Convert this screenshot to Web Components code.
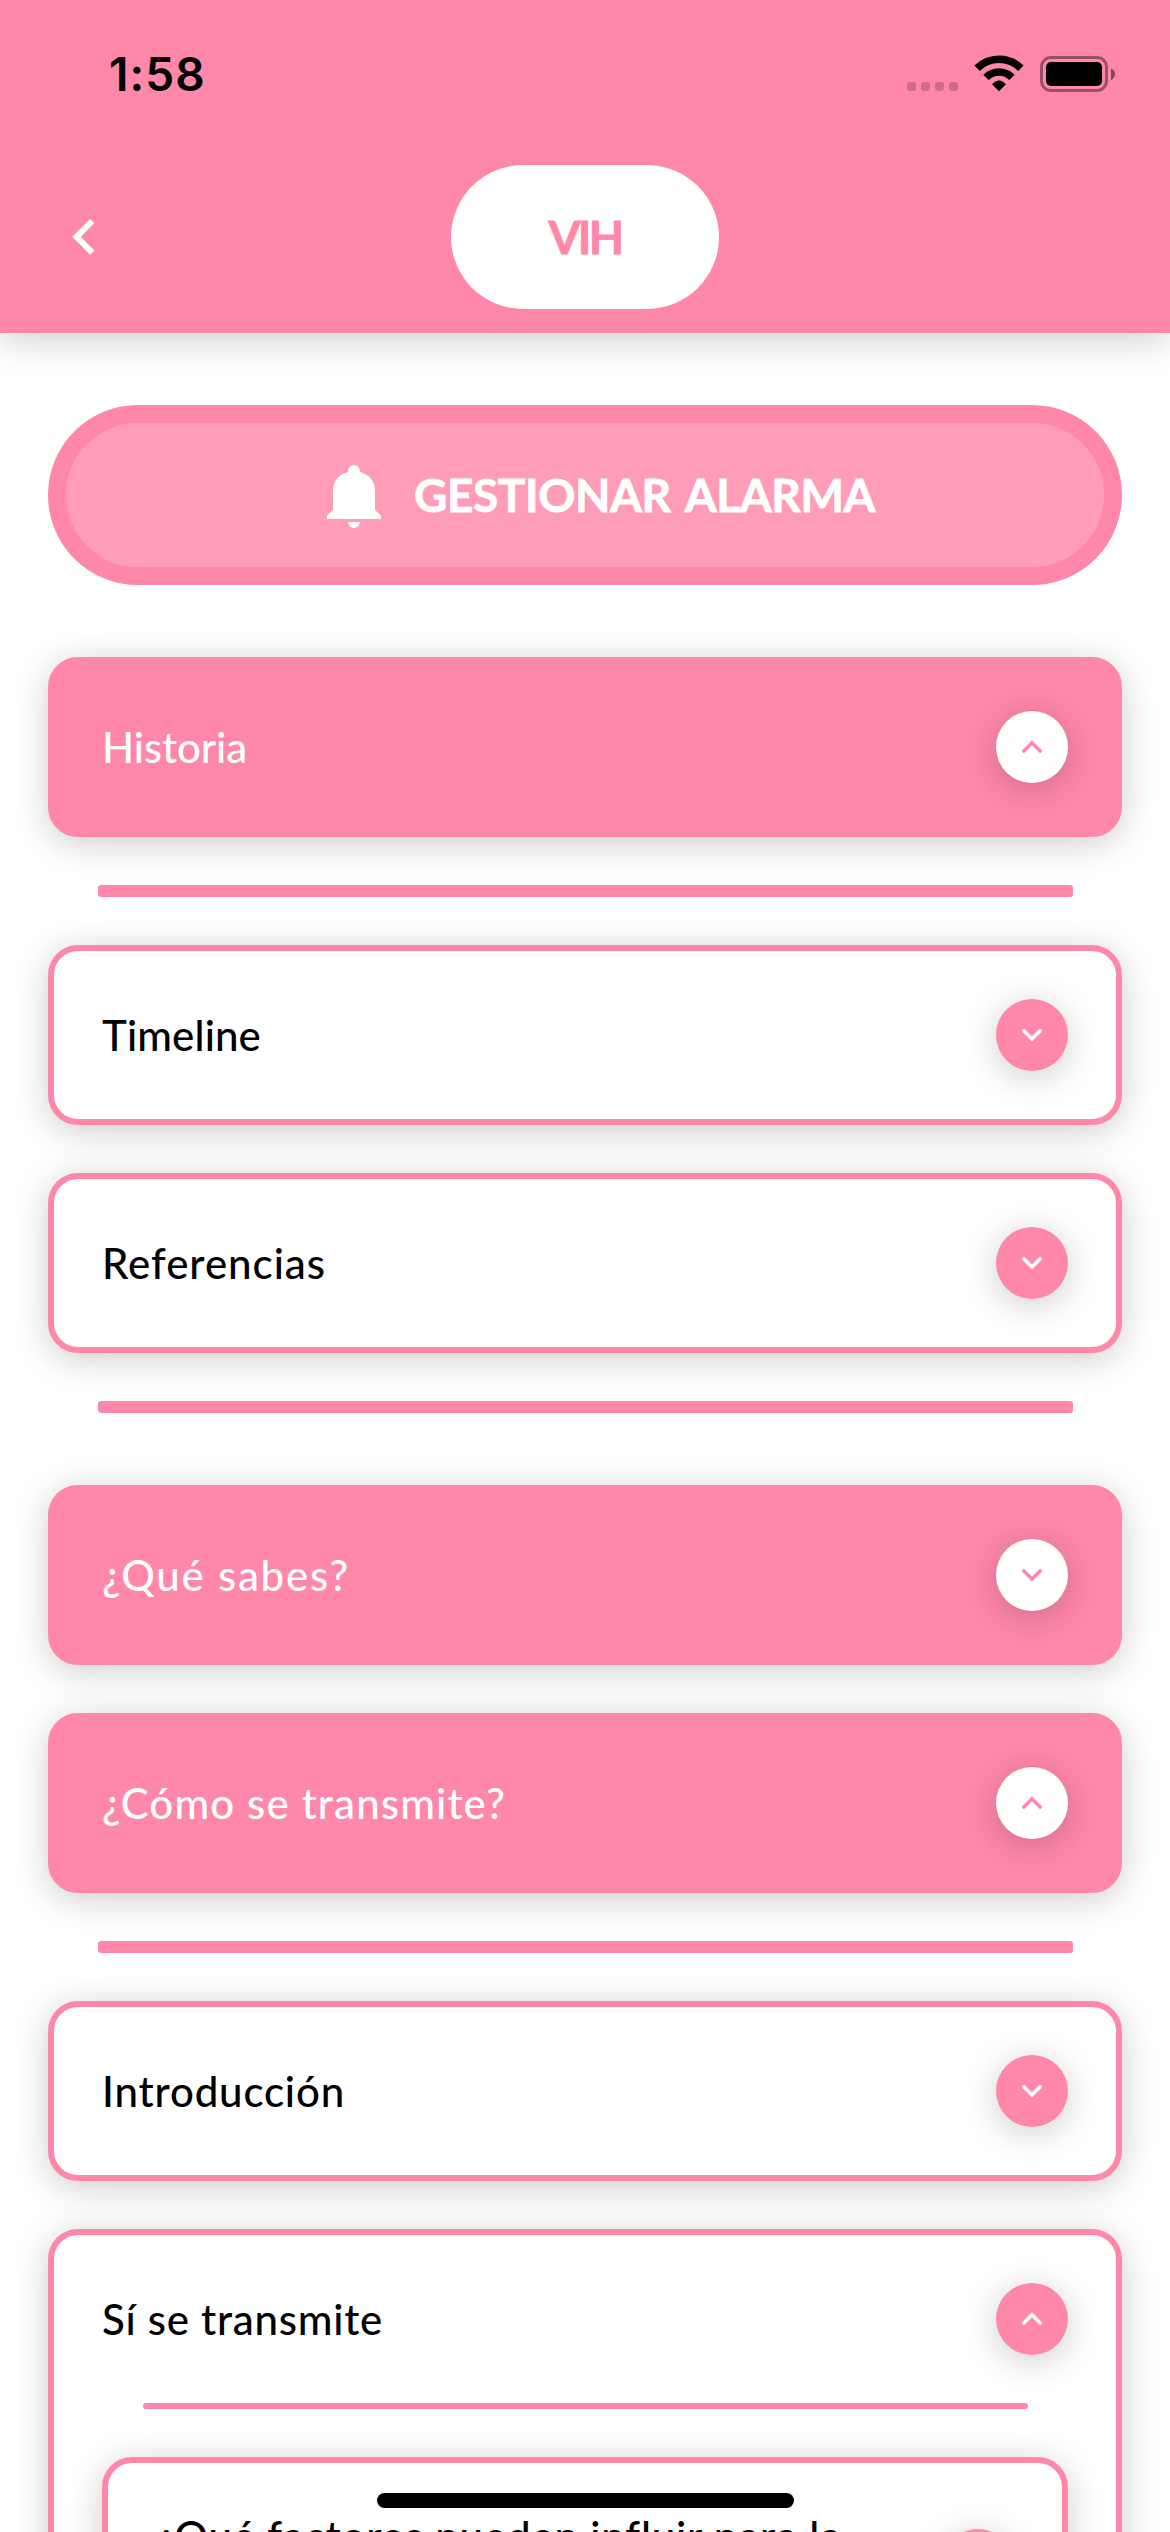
<!DOCTYPE html>
<html lang="es">
<head>
<meta charset="utf-8">
<title>VIH</title>
<style>
  :root { --pink: #ff87aa; --soft: #ff9cb8; --shadow: 0 6px 36px rgba(0,0,0,.2); }
  html, body { margin: 0; background: #fff; height: 2532px; overflow: hidden; }
  body { font-family: Lato, "Open Sans", sans-serif; font-weight: 500; color: #000; }
</style>
</head>
<body>
<app-screen>
  <app-header slot="header" time="1:58"><fit-text width="73">VIH</fit-text></app-header>
  <alarm-button><fit-text width="461">GESTIONAR ALARMA</fit-text></alarm-button>
  <accordion-card solid open style="margin-top:72px"><fit-text slot="title" width="145">Historia</fit-text></accordion-card>
  <rule-bar></rule-bar>
  <accordion-card><fit-text slot="title" width="159">Timeline</fit-text></accordion-card>
  <accordion-card style="margin-top:48px"><fit-text slot="title" width="224">Referencias</fit-text></accordion-card>
  <rule-bar></rule-bar>
  <accordion-card solid style="margin-top:24px"><fit-text slot="title" width="248">¿Qué sabes?</fit-text></accordion-card>
  <accordion-card solid open style="margin-top:48px"><fit-text slot="title" width="404">¿Cómo se transmite?</fit-text></accordion-card>
  <rule-bar></rule-bar>
  <accordion-card><fit-text slot="title" width="243">Introducción</fit-text></accordion-card>
  <accordion-card open style="margin-top:48px"><fit-text slot="title" width="281">Sí se transmite</fit-text>
    <rule-bar thin></rule-bar>
    <accordion-card tall><fit-text slot="title" width="686">¿Qué factores pueden influir para la</fit-text></accordion-card>
  </accordion-card>
</app-screen>
<home-indicator></home-indicator>

<script>
const define = (name, html, extra) => {
  const tpl = document.createElement('template');
  tpl.innerHTML = html;
  customElements.define(name, class extends HTMLElement {
    constructor() {
      super();
      this.attachShadow({ mode: 'open' }).append(tpl.content.cloneNode(true));
    }
    connectedCallback() { if (extra) extra(this, this.shadowRoot); }
  });
};

define('app-screen', `
  <style>
    :host { display: flex; flex-direction: column; height: 2532px; overflow: hidden; }
    main { display: flex; flex: none; flex-direction: column; padding: 72px 48px 0; }
  </style>
  <slot name="header"></slot><main><slot></slot></main>`);

define('status-bar', `
  <style>
    :host { display: flex; justify-content: space-between; align-items: flex-start; height: 54px; padding: 47px 54px 0 109px; color: #000; }
    span { font: 600 46px/54px Inter, sans-serif; letter-spacing: 1.1px; }
    svg { display: block; }
  </style>
  <span></span>
  <svg width="209" height="54" viewBox="907 47 209 54">
    <g fill="#000" fill-opacity=".2"><rect x="907" y="82" width="9" height="9" rx="3"/><rect x="921" y="82" width="9" height="9" rx="3"/><rect x="935" y="82" width="9" height="9" rx="3"/><rect x="949" y="82" width="9" height="9" rx="3"/></g>
    <g fill="none" stroke="#000" stroke-width="7.6"><path d="M977.1 68.3A31.2 31.2 0 0 1 1020.9 68.3"/><path d="M986 77.4A18.3 18.3 0 0 1 1012 77.4"/></g>
    <path d="M992 84.2Q999 76.600 1006 84.200L999 91.200Z"/>
    <rect x="1041.500" y="57.500" width="65" height="33" rx="9.500" fill="none" stroke="#000" stroke-opacity=".4" stroke-width="3"/>
    <rect x="1046" y="62" width="56" height="24" rx="5"/>
    <path d="M1111 68.500Q1115 70.500 1115 74.200T1111 80Z" fill-opacity=".5"/>
  </svg>`);

define('app-header', `
  <style>
    :host { display: block; flex: none; position: relative; height: 333px; background: var(--pink); box-shadow: var(--shadow); }
    .row { display: grid; grid-template-columns: 1fr 268px 1fr; align-items: center; height: 144px; margin-top: 64px; }
    .back { display: block; margin-left: 66px; }
    .pill { display: flex; align-items: center; justify-content: center; height: 144px; border-radius: 72px; background: #fff; color: var(--pink); font-size: 46px; font-weight: 700; line-height: 60px; -webkit-text-stroke: .8px currentColor; }
  </style>
  <status-bar></status-bar>
  <div class="row">
    <svg class="back" width="36" height="48" viewBox="66 213 36 48" fill="none" stroke="#fff" stroke-width="6"><path d="M92.2 221L76.500 236.800L92.200 252.600"/></svg>
    <div class="pill"><slot></slot></div>
  </div>`,
  (el, root) => { root.querySelector('status-bar').shadowRoot.querySelector('span').textContent = el.getAttribute('time'); });

define('alarm-button', `
  <style>
    :host { display: flex; align-items: center; box-sizing: border-box; height: 180px; padding: 3px 0 0 261px; border: 18px solid var(--pink); border-radius: 90px; background: var(--soft); color: #fff; font-size: 46px; font-weight: 700; line-height: 60px; word-spacing: 5px; gap: 33px; -webkit-text-stroke: .8px currentColor; }
    svg { display: block; }
    ::slotted(*) { padding-bottom: 3px; }
  </style>
  <svg width="54" height="63" viewBox="327 465 54 63" fill="#fff"><path d="M348 472V471A6 6 0 0 1 360 471V472Q375 476 375 492V510L381 515.500V519H327V515.500L333 510V492Q333 476 348 472ZM348 522H360A6 6 0 0 1 348 522Z"/></svg>
  <slot></slot>`);

define('rule-bar', `
  <style>
    :host { display: block; height: 12px; margin: 48px 49px 48px 50px; border-radius: 3px; background: var(--pink); }
    :host([thin]) { height: 6px; margin: 0 40px 48px 41px; }
  </style>`);

define('toggle-dot', `
  <style>
    :host { display: block; flex: none; width: 72px; height: 72px; border-radius: 50%; background: var(--dot); color: var(--mark); box-shadow: var(--shadow); }
    svg { display: block; fill: none; stroke: currentColor; stroke-width: 3.6; stroke-linecap: round; }
    .up { display: none; }
    :host([up]) .up { display: inline; }
    :host([up]) .down { display: none; }
  </style>
  <svg width="72" height="72"><path class="down" d="M27.800 31.800L36 40L44.200 31.800"/><path class="up" d="M27.800 40L36 31.800L44.200 40"/></svg>`);

define('accordion-card', `
  <style>
    :host { display: block; box-sizing: border-box; border: 6px solid var(--pink); border-radius: 30px; background: #fff; color: #000; box-shadow: var(--shadow); padding: 0 48px; font-size: 42px; font-weight: 500; line-height: 54px; --dot: var(--pink); --mark: #fff; }
    :host([solid]) { background: var(--pink); color: #fff; --dot: #fff; --mark: var(--pink); }
    header { display: flex; align-items: center; justify-content: space-between; height: 168px; }
    :host([tall]) header { height: 204px; }
    :host([tall]) ::slotted([slot=title]) { align-self: flex-start; margin-top: 46px; }
  </style>
  <header><slot name="title"></slot><toggle-dot></toggle-dot></header><slot></slot>`,
  (el, root) => { root.querySelector('toggle-dot').toggleAttribute('up', el.hasAttribute('open')); });

define('home-indicator', `
  <style>:host { position: absolute; left: 377px; top: 2493px; width: 417px; height: 15px; border-radius: 8px; background: #000; }</style>`);

/* Spreads tracking evenly so that a label takes up its given width. */
define('fit-text', `
  <style>:host { display: block; white-space: nowrap; } span { display: inline-block; }</style>
  <span><slot></slot></span>`,
  (el, root) => {
    const span = root.querySelector('span');
    const gap = (Number(el.getAttribute('width')) - span.getBoundingClientRect().width) / el.textContent.length;
    span.style.letterSpacing = gap.toFixed(3) + 'px';
  });
</script>
</body>
</html>
